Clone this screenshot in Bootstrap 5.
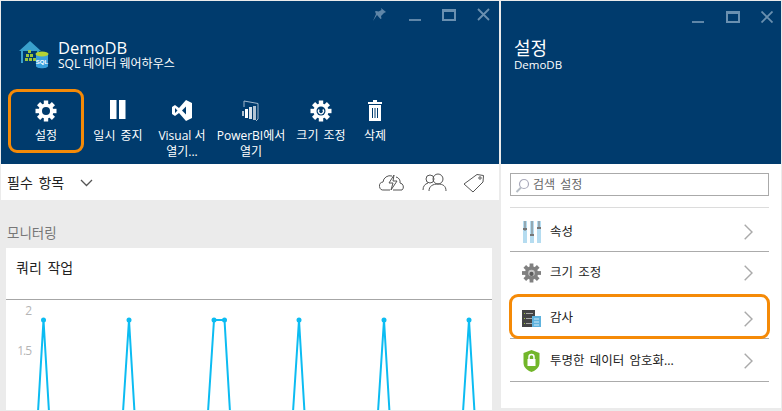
<!DOCTYPE html>
<html lang="ko"><head><meta charset="utf-8">
<link href="https://cdn.jsdelivr.net/npm/bootstrap@5.3.0/dist/css/bootstrap.min.css" rel="stylesheet">
<style>
html,body{height:411px;overflow:hidden}
body{background:#ebebeb;font-family:"Open Sans","Noto Sans CJK KR",sans-serif;color:#222;padding:1px 1px 0 1px;word-spacing:2px}
.shell{height:410px;gap:2px}
.blade-a{width:498px}.blade-b{width:280px}
.hero{background:#003b6d;height:163px;color:#fff}
.wctl{height:29px;padding:7px 9px 0 0;gap:21px}
.wctl-b{padding:10px 8px 0 0;gap:21px}
.minb{margin-right:1px}
.brand{padding:9px 0 0 18px;gap:8px;height:60px}
.brand-ic{margin-top:2px}
.brand-t{font-size:16.5px;line-height:17px}
.brand-s{font-size:12px;line-height:15px;word-spacing:0}
.tbar{display:grid;grid-template-columns:72px 72px 56px 82px 58px 50px;margin:0 0 0 9px;height:62px;width:max-content}
.tool{font-size:12px;line-height:16px;text-align:center;padding-top:10px;white-space:nowrap}
.tool-ic{height:24px;margin-bottom:4px}
.tool-n{word-spacing:0}
.ring{position:relative}
.ring::after{content:"";position:absolute;border:3px solid #f58a07;border-radius:9px;pointer-events:none}
.tool.ring::after{inset:-1px -2px 7px -2px}
.strip{height:36px;background:#fff;padding:1px 14px 0 6px}
.strip-t{font-size:14px}
.chev-d{margin-left:8px}
.mon{font-size:13.5px;color:#777;padding:23px 0 5px 6px;line-height:20px}
.panel-c{background:#fff;margin:0 7px 0 5px;height:162px;overflow:hidden}
.panel-h{height:52px;padding:10px 10px;font-size:14px;border-bottom:1px solid #a6a6a6;line-height:20px}
.yl{fill:#b5b5b5;font-size:12px;font-family:"Open Sans",sans-serif;letter-spacing:-1px}
.rp{background:#fff;height:244px;padding:9px 12px 0 9px}
.sbox{height:23px;border:1px solid #aaa;padding:1px 0 0 4px;gap:3px;font-size:12px;color:#666}
.hero-b{padding:0 0 0 14px}
.hb-t{font-size:18px;line-height:20px;margin-top:8px;margin-left:-1px}
.hb-s{font-size:11.5px;line-height:14px;margin-left:-1px}
.lrows{margin-top:11px;border-top:1px solid #dcdcdc}
.lrow{height:43.5px;padding:6px 16px 0 12px;font-size:12.5px;gap:9px;border-bottom:1px solid #ababab}
.lrow-2{padding-top:1px}
.lrow-3{padding-top:5px}
.lrow-4{padding-top:3px}
.lrow.nob{border-bottom-color:transparent}
.lrow-ic{width:19px;height:24px}
.lrow.ring::after{inset:-1px -1px -1px -1px}
</style></head><body>
<div class="shell d-flex">
<div class="blade-a d-flex flex-column">
 <div class="hero">
  <div class="wctl d-flex justify-content-end align-items-start">
   <svg width="16" height="14" viewBox="0 0 16 14"><path d="M9 0l5 4-2 1-3 3 .5 2.500-1 .5L5 7 1 13 4 6 3 3.500l1-.5 2.500.5 3-1.500z" fill="#5f86a8"/></svg>
   <svg width="12" height="14" viewBox="0 0 12 14"><rect y="11" width="12" height="2" fill="#5f86a8"/></svg>
   <svg width="14" height="13" viewBox="0 0 14 13"><path d="M0 1h14v12H0z M2 4v7h10V4z" fill="#6a90b0" fill-rule="evenodd"/></svg>
   <svg width="13" height="13" viewBox="0 0 13 13"><path d="M1 1l11 11M12 1L1 12" stroke="#6a90b0" stroke-width="1.800"/></svg>
  </div>
  <div class="brand d-flex">
   <svg class="brand-ic" width="31" height="29" viewBox="0 0 31 29">
    <path d="M0 10L11 0l11 10h-2v12H2V10z" fill="#3aa0cc"/><rect x="4" y="10" width="14" height="12" fill="#003b6d"/>
    <g fill="#9bc53d"><rect x="9" y="9" width="3" height="3"/><rect x="7" y="13" width="3" height="3"/><rect x="11" y="13" width="3" height="3"/><rect x="6" y="17" width="3" height="3"/><rect x="10" y="17" width="3" height="3"/><rect x="14" y="17" width="3" height="3"/></g>
    <path d="M17 13v12c0 3 12 3 12 0V13z" fill="#3aa0dc"/><ellipse cx="23" cy="13" rx="6.500" ry="2.500" fill="#b5d334"/>
    <text x="23" y="23" font-size="6" font-weight="700" fill="#fff" text-anchor="middle" font-family="Liberation Sans">SQL</text>
   </svg>
   <div><div class="brand-t">DemoDB</div><div class="brand-s">SQL 데이터 웨어하우스</div></div>
  </div>
  <div class="tbar">
   <div class="tool ring"><div class="tool-ic"><svg width="22" height="22" viewBox="-11 -11 22 22"><g fill="#fff"><circle r="7.500"/><rect x="-2.200" y="-10.500" width="4.400" height="21"/><rect x="-2.200" y="-10.500" width="4.400" height="21" transform="rotate(45)"/><rect x="-2.200" y="-10.500" width="4.400" height="21" transform="rotate(90)"/><rect x="-2.200" y="-10.500" width="4.400" height="21" transform="rotate(135)"/></g><circle r="4" fill="#003b6d"/></svg></div>설정</div>
   <div class="tool"><div class="tool-ic"><svg width="16" height="19" viewBox="0 0 16 19"><rect width="6.500" height="19" fill="#fff"/><rect x="9" width="6.500" height="19" fill="#fff"/></svg></div>일시 중지</div>
   <div class="tool tool-n"><div class="tool-ic"><svg width="20" height="21" viewBox="0 0 20 21"><path fill-rule="evenodd" fill="#fff" d="M14 0l6 3v15l-6 3-7-8-4 3-3-2V7l3-2 4 3zM3 8v5l2.500-2.500zM14 6.500l-4 4 4 4z"/></svg></div>Visual 서<br>열기...</div>
   <div class="tool"><div class="tool-ic"><svg width="20" height="22" viewBox="0 0 20 22"><path d="M3 7V1l14 2.500V19l-2 2" fill="none" stroke="#9fb6cb" stroke-width="1"/><g fill="#fff"><rect x="1" y="11" width="2" height="5" opacity=".7"/><rect x="4" y="9" width="3" height="9"/><rect x="8" y="7" width="3" height="12" opacity=".85"/><rect x="12" y="6" width="3" height="14" opacity=".7"/></g></svg></div>PowerBI에서<br>열기</div>
   <div class="tool"><div class="tool-ic"><svg width="22" height="22" viewBox="-11 -11 22 22"><g fill="#fff"><circle r="7.500"/><rect x="-2.200" y="-10.500" width="4.400" height="21"/><rect x="-2.200" y="-10.500" width="4.400" height="21" transform="rotate(45)"/><rect x="-2.200" y="-10.500" width="4.400" height="21" transform="rotate(90)"/><rect x="-2.200" y="-10.500" width="4.400" height="21" transform="rotate(135)"/></g><circle r="4.500" fill="#003b6d"/><path d="M-1.800-1.500A2.500 2.500 0 1 0 1.800-1.500" fill="none" stroke="#fff" stroke-width="1.300"/></svg></div>크기 조정</div>
   <div class="tool"><div class="tool-ic"><svg width="14" height="21" viewBox="0 0 14 21"><path fill="#fff" fill-rule="evenodd" d="M5 0h4v2h5v2H0V2h5zM1 5h12v16H1zM4 8v10h1V8zM6.500 8v10h1V8zM9 8v10h1V8z"/></svg></div>삭제</div>
  </div>
 </div>
 <div class="strip d-flex align-items-center justify-content-between">
  <div class="d-flex align-items-center strip-t gap-2">필수 항목<svg class="chev-d" width="13" height="8" viewBox="0 0 13 8"><path d="M1 1l5.500 5.500L12 1" fill="none" stroke="#555" stroke-width="1.300"/></svg></div>
  <div class="d-flex align-items-center gap-3">
   <svg width="27" height="19" viewBox="0 0 27 19" fill="none" stroke="#555" stroke-width="1"><path d="M11 17H5a4 4 0 0 1-1-8 7 7 0 0 1 9-6M17 4a5 5 0 0 1 4 6 4 4 0 0 1 2 7h-9"/><path d="M15 2l-5 8h4l-2 7 6-9h-4z"/></svg>
   <svg width="25" height="19" viewBox="0 0 25 19" fill="none" stroke="#555" stroke-width="1"><circle cx="8" cy="6" r="4"/><circle cx="16" cy="6" r="5"/><path d="M1 17c0-4 2-6 5-7M7 18c0-5 4-7 9-7s8 2 8 7"/></svg>
   <svg width="22" height="20" viewBox="0 0 22 20" fill="none" stroke="#555" stroke-width="1"><path d="M14 1.500l6.500 1-.5 6.500L10 19 1 11z"/><circle cx="17" cy="5" r="1.200"/></svg>
  </div>
 </div>
 <div class="mon">모니터링</div>
 <div class="panel-c">
  <div class="panel-h">쿼리 작업</div>
  <svg width="486" height="110" viewBox="0 0 486 110" class="d-block">
   <text x="25" y="15" class="yl" text-anchor="end">2</text>
   <text x="25" y="55" class="yl" text-anchor="end">1.5</text>
   <g fill="none" stroke="#0cbcf2" stroke-width="2">
    <path d="M32 112L37.500 20 43 112M117 112L123 20 128.500 112M202 112L208 20H218.500L224 112M287 112L293 20 298.500 112M372 112L378 20 383.500 112M457 112L463 20 468.500 112"/></g>
   <g fill="#0cbcf2"><circle cx="37.500" cy="20" r="2.500"/><circle cx="123" cy="20" r="2.500"/><circle cx="208" cy="20" r="2.500"/><circle cx="218.500" cy="20" r="2.500"/><circle cx="293" cy="20" r="2.500"/><circle cx="378" cy="20" r="2.500"/><circle cx="463" cy="20" r="2.500"/></g>
  </svg>
 </div>
</div>
<div class="blade-b d-flex flex-column">
 <div class="hero hero-b">
  <div class="wctl wctl-b d-flex justify-content-end align-items-start">
   <svg class="minb" width="12" height="14" viewBox="0 0 12 14"><rect y="10" width="12" height="2" fill="#5f86a8"/></svg>
   <svg width="14" height="12" viewBox="0 0 14 12"><path d="M0 0h14v12H0z M2 3v7h10V3z" fill="#6a90b0" fill-rule="evenodd"/></svg>
   <svg width="12" height="12" viewBox="0 0 12 12"><path d="M.5.500l11 11M11.500.500l-11 11" stroke="#6a90b0" stroke-width="1.800"/></svg>
  </div>
  <div class="hb-t">설정</div><div class="hb-s">DemoDB</div>
 </div>
 <div class="rp">
  <div class="sbox d-flex align-items-center"><svg width="15" height="15" viewBox="0 0 15 15" fill="none"><circle cx="9" cy="6" r="4.500" stroke="#aab" stroke-width="1.200"/><path d="M6 9.500L1.500 14" stroke="#b5bcc4" stroke-width="2"/></svg>검색 설정</div>
  <div class="lrows">
   <div class="lrow d-flex align-items-center"><svg class="lrow-ic" viewBox="0 0 19 24"><g fill="#b5dcf0"><rect x="1" y="1" width="4" height="22"/><rect x="8" y="1" width="4" height="22"/><rect x="15" y="1" width="4" height="22"/></g><g fill="#777"><rect x="2.500" y="1" width="1" height="10"/><rect x="9.500" y="1" width="1" height="14"/><rect x="16.500" y="1" width="1" height="8"/><rect x="1" y="8" width="4" height="2"/><rect x="8" y="14" width="4" height="2"/><rect x="15" y="7" width="4" height="2"/></g></svg><span class="flex-grow-1">속성</span><svg width="9" height="16" viewBox="0 0 9 16"><path d="M.7.700L8 8 .7 15.300" fill="none" stroke="#aaa" stroke-width="1.400"/></svg></div>
   <div class="lrow lrow-2 d-flex align-items-center nob"><svg class="lrow-ic" viewBox="-10 -12 20 24"><g fill="#808080"><circle r="7"/><rect x="-2" y="-10" width="4" height="20"/><rect x="-2" y="-10" width="4" height="20" transform="rotate(45)"/><rect x="-2" y="-10" width="4" height="20" transform="rotate(90)"/><rect x="-2" y="-10" width="4" height="20" transform="rotate(135)"/></g><circle r="3.500" fill="#c5c5c5"/><circle cy="1" r="2.200" fill="#5c5c5c"/></svg><span class="flex-grow-1">크기 조정</span><svg width="9" height="16" viewBox="0 0 9 16"><path d="M.7.700L8 8 .7 15.300" fill="none" stroke="#aaa" stroke-width="1.400"/></svg></div>
   <div class="lrow lrow-3 d-flex align-items-center ring"><svg class="lrow-ic" viewBox="0 0 19 24"><rect y="3" width="13" height="17" fill="#444"/><g fill="#9bc53d"><rect x="2" y="6" width="1" height="1"/><rect x="2" y="11" width="1" height="1"/><rect x="2" y="16" width="1" height="1"/></g><g fill="#aaa"><rect x="4" y="6" width="7" height="1"/><rect x="4" y="11" width="7" height="1"/><rect x="4" y="16" width="7" height="1"/></g><rect x="10" y="9" width="9" height="11" fill="#5fb3de"/><path d="M12 12h5M12 15h5M12 18h5" stroke="#cfeaf7"/></svg><span class="flex-grow-1">감사</span><svg width="9" height="16" viewBox="0 0 9 16"><path d="M.7.700L8 8 .7 15.300" fill="none" stroke="#aaa" stroke-width="1.400"/></svg></div>
   <div class="lrow lrow-4 d-flex align-items-center"><svg class="lrow-ic" viewBox="0 0 19 24"><path d="M9.500 1l8 3v10c0 5-5 8-8 9-3-1-8-4-8-9V4z" fill="#72b62a"/><rect x="5.500" y="10" width="8" height="7" fill="#fff"/><path d="M7 10V8a2.500 2.500 0 0 1 5 0v2" fill="none" stroke="#fff" stroke-width="1.500"/></svg><span class="flex-grow-1">투명한 데이터 암호화...</span><svg width="9" height="16" viewBox="0 0 9 16"><path d="M.7.700L8 8 .7 15.300" fill="none" stroke="#aaa" stroke-width="1.400"/></svg></div>
  </div>
 </div>
</div>
</div>
</body></html>
